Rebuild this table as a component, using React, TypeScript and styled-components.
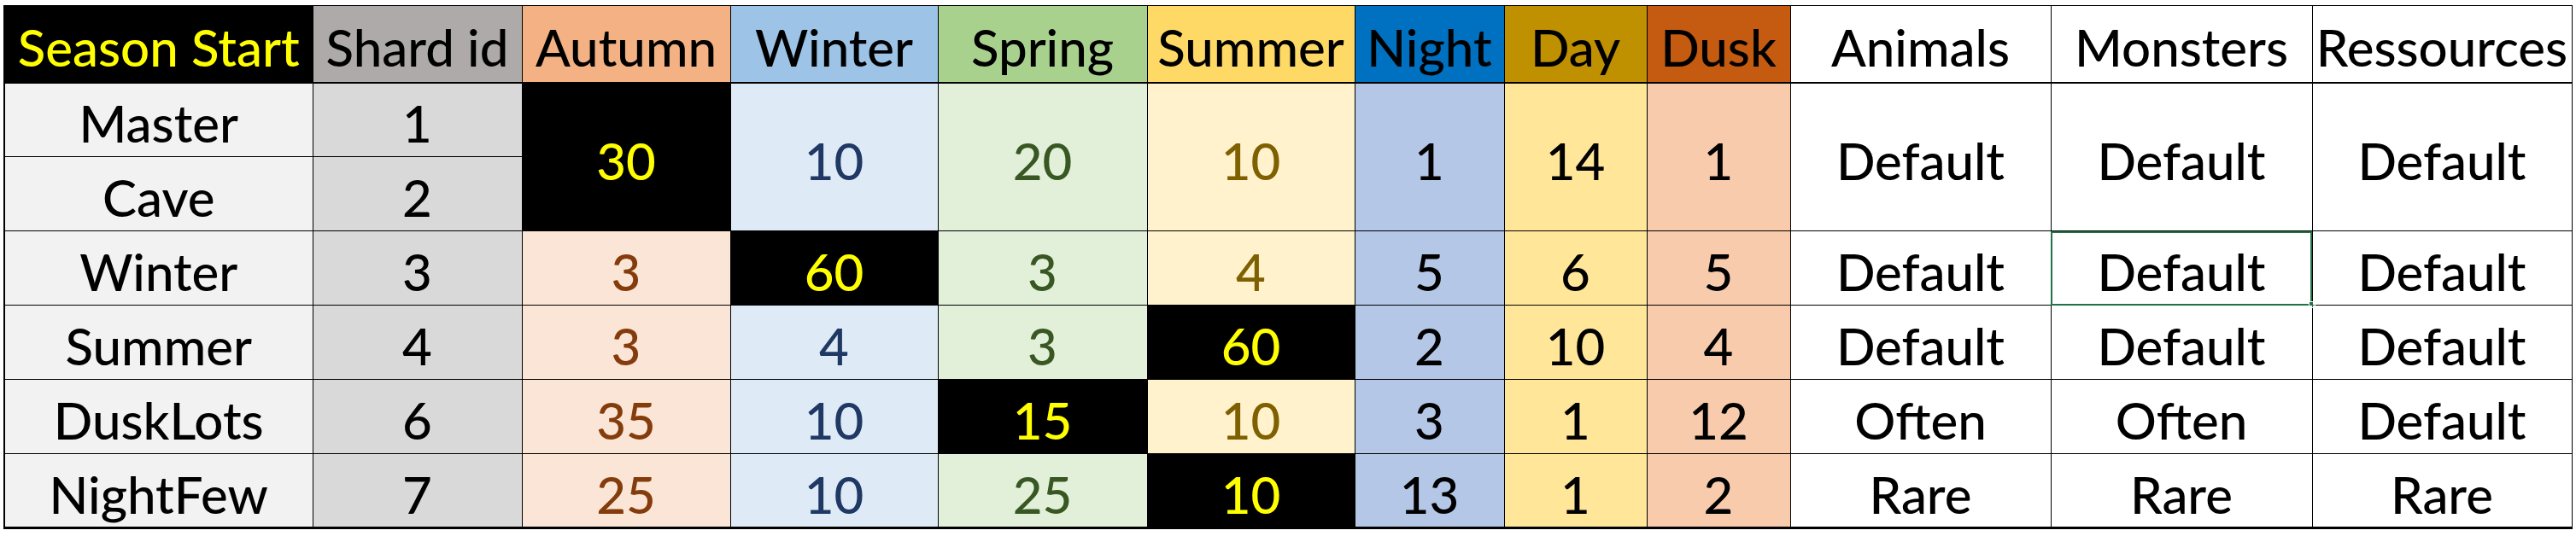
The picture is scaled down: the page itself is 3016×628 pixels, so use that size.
import React from 'react';
import styled, { createGlobalStyle } from 'styled-components';

const GlobalStyle = createGlobalStyle`
  html, body {
    margin: 0;
    background: #ffffff;
  }
`;

type Col = {
  label: string;
  width: number;
  head: string;
  headInk: string;
  body: string;
  ink: string;
};

const cols: Col[] = [
  { label: 'Season Start', width: 361, head: '#000000', headInk: '#ffff00', body: '#f2f2f2', ink: '#000000' },
  { label: 'Shard id', width: 245, head: '#aeaaaa', headInk: '#000000', body: '#d9d9d9', ink: '#000000' },
  { label: 'Autumn', width: 244, head: '#f4b183', headInk: '#000000', body: '#fbe5d6', ink: '#843c0c' },
  { label: 'Winter', width: 243, head: '#9dc3e6', headInk: '#000000', body: '#deebf7', ink: '#203864' },
  { label: 'Spring', width: 245, head: '#a9d18e', headInk: '#000000', body: '#e2f0d9', ink: '#385723' },
  { label: 'Summer', width: 243, head: '#ffd966', headInk: '#000000', body: '#fff2cc', ink: '#7f6000' },
  { label: 'Night', width: 175, head: '#0070c0', headInk: '#000000', body: '#b4c7e7', ink: '#000000' },
  { label: 'Day', width: 167, head: '#bf9000', headInk: '#000000', body: '#ffe699', ink: '#000000' },
  { label: 'Dusk', width: 168, head: '#c55a11', headInk: '#000000', body: '#f8cbad', ink: '#000000' },
  { label: 'Animals', width: 305, head: '#ffffff', headInk: '#000000', body: '#ffffff', ink: '#000000' },
  { label: 'Monsters', width: 306, head: '#ffffff', headInk: '#000000', body: '#ffffff', ink: '#000000' },
  { label: 'Ressources', width: 304, head: '#ffffff', headInk: '#000000', body: '#ffffff', ink: '#000000' },
];

// values for columns 2..11; '*' prefix marks the black / yellow highlight
type Row = { name: string; id: number; values?: string[]; span?: number };

const rows: Row[] = [
  { name: 'Master', id: 1, span: 2, values: ['*30', '10', '20', '10', '1', '14', '1', 'Default', 'Default', 'Default'] },
  { name: 'Cave', id: 2 },
  { name: 'Winter', id: 3, values: ['3', '*60', '3', '4', '5', '6', '5', 'Default', 'Default', 'Default'] },
  { name: 'Summer', id: 4, values: ['3', '4', '3', '*60', '2', '10', '4', 'Default', 'Default', 'Default'] },
  { name: 'DuskLots', id: 6, values: ['35', '10', '*15', '10', '3', '1', '12', 'Often', 'Often', 'Default'] },
  { name: 'NightFew', id: 7, values: ['25', '10', '25', '*10', '13', '1', '2', 'Rare', 'Rare', 'Rare'] },
];

// the cell with Excel's green selection frame
const picked = { row: 2, col: 10 };

const Page = styled.div`
  padding: 6px 0 0 4px;
`;

const Sheet = styled.table`
  table-layout: fixed;
  border-collapse: collapse;
  width: 3006px;
  font-family: Lato, "Liberation Sans", sans-serif;
  font-size: 60px;
  font-weight: 500;
  line-height: 1;
  border-left: 2px solid #000;
  border-bottom: 3px solid #000;
`;

const HeadCell = styled.th<{ $bg: string; $ink: string }>`
  box-sizing: border-box;
  height: 90px;
  padding: 8px 0 0;
  font-weight: 500;
  text-align: center;
  white-space: nowrap;
  overflow: hidden;
  background: ${p => p.$bg};
  color: ${p => p.$ink};
  border: 1px solid #000;
  border-bottom: 2px solid #000;
`;

const Cell = styled.td<{ $bg: string; $ink: string; $hot?: boolean; $picked?: boolean }>`
  box-sizing: border-box;
  height: 87px;
  padding: 8px 0 0;
  text-align: center;
  white-space: nowrap;
  background: ${p => (p.$hot ? '#000000' : p.$bg)};
  color: ${p => (p.$hot ? '#ffff00' : p.$ink)};
  border: 1px solid #000;
  position: relative;
  ${p =>
    p.$picked &&
    `
    outline: 2px solid #217346;
    outline-offset: -2px;
    &::after {
      content: '';
      position: absolute;
      right: -4px;
      bottom: -4px;
      width: 6px;
      height: 6px;
      background: #217346;
      border: 1px solid #fff;
    }
  `}
`;

export default function App() {
  return (
    <Page>
      <GlobalStyle />
      <Sheet>
        <colgroup>
          {cols.map(c => (
            <col key={c.label} style={{ width: c.width }} />
          ))}
        </colgroup>
        <thead>
          <tr>
            {cols.map(c => (
              <HeadCell key={c.label} $bg={c.head} $ink={c.headInk}>
                {c.label}
              </HeadCell>
            ))}
          </tr>
        </thead>
        <tbody>
          {rows.map((r, ri) => (
            <tr key={r.name}>
              <Cell $bg={cols[0].body} $ink={cols[0].ink}>{r.name}</Cell>
              <Cell $bg={cols[1].body} $ink={cols[1].ink}>{r.id}</Cell>
              {r.values?.map((v, vi) => {
                const c = cols[vi + 2];
                const hot = v.startsWith('*');
                return (
                  <Cell
                    key={c.label}
                    rowSpan={r.span}
                    $bg={c.body}
                    $ink={c.ink}
                    $hot={hot}
                    $picked={ri === picked.row && vi + 2 === picked.col}
                  >
                    {hot ? v.slice(1) : v}
                  </Cell>
                );
              })}
            </tr>
          ))}
        </tbody>
      </Sheet>
    </Page>
  );
}
